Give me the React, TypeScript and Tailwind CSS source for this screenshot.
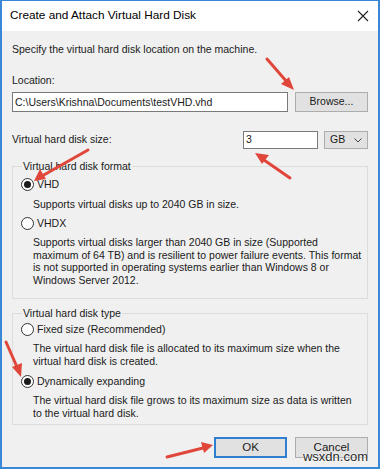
import React from "react";

const font = { fontFamily: '"Liberation Sans", Arial, sans-serif' };

function Radio({ checked, label }: { checked?: boolean; label: string }) {
  return (
    <div className="flex items-center h-[14px] pl-[8px]">
      <div className="w-[13px] h-[13px] rounded-full border border-[#333333] bg-white flex items-center justify-center">
        {checked && <div className="w-[7px] h-[7px] rounded-full bg-[#1a1a1a]" />}
      </div>
      <span className="ml-[3px] text-[10.5px] text-[#1a1a1a] leading-[14px]">{label}</span>
    </div>
  );
}

export default function App() {
  return (
    <div
      className="relative w-[380px] h-[469px] bg-[#f0f0f0] border-x-2 border-b-2 border-t border-[#3a87d6] overflow-hidden text-[#1a1a1a]"
      style={font}
    >
      {/* title bar */}
      <div className="h-[30px] bg-white flex items-center justify-between pl-[8px] pr-[9px]">
        <span className="text-[11.8px] text-black">Create and Attach Virtual Hard Disk</span>
        <svg width="12" height="12" viewBox="0 0 12 12">
          <path d="M1 1 L11 11 M11 1 L1 11" stroke="#222" strokeWidth="1.1" />
        </svg>
      </div>

      <div className="px-[10px] pt-[10px] text-[10.5px]">
        <div className="h-[16px] leading-[16px]">Specify the virtual hard disk location on the machine.</div>
        <div className="h-[16px] leading-[16px] mt-[15px]">Location:</div>
        <div className="flex mt-[4px] h-[20px] gap-[7px]">
          <div className="w-[276px] h-[20px] bg-white border border-[#7a7a7a] flex items-center pl-[2px] leading-[16px]">
            C:\Users\Krishna\Documents\testVHD.vhd
          </div>
          <div className="w-[73px] h-[20px] bg-[#e1e1e1] border border-[#adadad] flex items-center justify-center">
            Browse...
          </div>
        </div>

        <div className="flex items-center mt-[19px] h-[18px]">
          <span className="flex-1">Virtual hard disk size:</span>
          <div className="w-[75px] h-[18px] bg-white border border-[#7a7a7a] flex items-center pl-[2px]">3</div>
          <div className="ml-[6px] w-[44px] h-[18px] bg-[#e1e1e1] border border-[#adadad] flex items-center justify-between pl-[5px] pr-[5px]">
            <span>GB</span>
            <svg width="8" height="5" viewBox="0 0 8 5">
              <path d="M0.5 0.5 L4 4 L7.5 0.5" stroke="#444" strokeWidth="1" fill="none" />
            </svg>
          </div>
        </div>

        {/* format group */}
        <fieldset className="mt-[10px] h-[140px] border border-[#dcdcdc] px-0">
          <legend className="ml-[9px] px-[1px] leading-[14px] text-[10.5px]">Virtual hard disk format</legend>
          <div className="mt-[4px]">
            <Radio checked label="VHD" />
          </div>
          <div className="pl-[20px] mt-[6px] leading-[14px] h-[14px]">Supports virtual disks up to 2040 GB in size.</div>
          <div className="mt-[5px]">
            <Radio label="VHDX" />
          </div>
          <div className="pl-[20px] mt-[6px] leading-[12.7px] whitespace-nowrap">
            Supports virtual disks larger than 2040 GB in size (Supported
            <br />
            maximum of 64 TB) and is resilient to power failure events. This format
            <br />
            is not supported in operating systems earlier than Windows 8 or
            <br />
            Windows Server 2012.
          </div>
        </fieldset>

        {/* type group */}
        <fieldset className="mt-[7px] h-[119px] border border-[#dcdcdc] px-0">
          <legend className="ml-[9px] px-[1px] leading-[14px] text-[10.5px]">Virtual hard disk type</legend>
          <div className="mt-[2px]">
            <Radio label="Fixed size (Recommended)" />
          </div>
          <div className="pl-[20px] mt-[6px] leading-[12.7px] whitespace-nowrap">
            The virtual hard disk file is allocated to its maximum size when the
            <br />
            virtual hard disk is created.
          </div>
          <div className="mt-[7px]">
            <Radio checked label="Dynamically expanding" />
          </div>
          <div className="pl-[20px] mt-[6px] leading-[12.7px] whitespace-nowrap">
            The virtual hard disk file grows to its maximum size as data is written
            <br />
            to the virtual hard disk.
          </div>
        </fieldset>

        <div className="flex justify-end gap-[8px] mt-[12px]">
          <div className="w-[73px] h-[21px] bg-[#e1e1e1] border-2 border-[#2f7fd0] flex items-center justify-center text-[11.5px]">OK</div>
          <div className="w-[73px] h-[21px] bg-[#e1e1e1] border border-[#adadad] flex items-center justify-center text-[11.5px]">Cancel</div>
        </div>
      </div>

      {/* watermark */}
      <div
        className="absolute right-[10px] bottom-[3px] text-[13px] text-[#2a2a2a] leading-[14px]"
        style={{ textShadow: "0 0 2px #fff, 0 0 2px #fff" }}
      >
        wsxdn.com
      </div>

      {/* red arrows */}
      <svg className="absolute left-[-2px] top-[-1px] pointer-events-none" width="380" height="469" viewBox="0 0 380 469">
        <g stroke="#e0463a" strokeWidth="3" strokeLinecap="round" fill="#e0463a">
          <line x1="267" y1="59" x2="287" y2="82" />
          <polygon points="294,90 281,84 289,77" stroke="none" />
          <line x1="290" y1="178" x2="264" y2="160" />
          <polygon points="255,153 269,155 262,164" stroke="none" />
          <line x1="88" y1="150" x2="42" y2="176" />
          <polygon points="34,181 40,169 46,179" stroke="none" />
          <line x1="6" y1="342" x2="17" y2="367" />
          <polygon points="21,377 12,367 22,363" stroke="none" />
          <line x1="167" y1="457" x2="203" y2="448" />
          <polygon points="213,445 201,442 204,453" stroke="none" />
        </g>
      </svg>
    </div>
  );
}
